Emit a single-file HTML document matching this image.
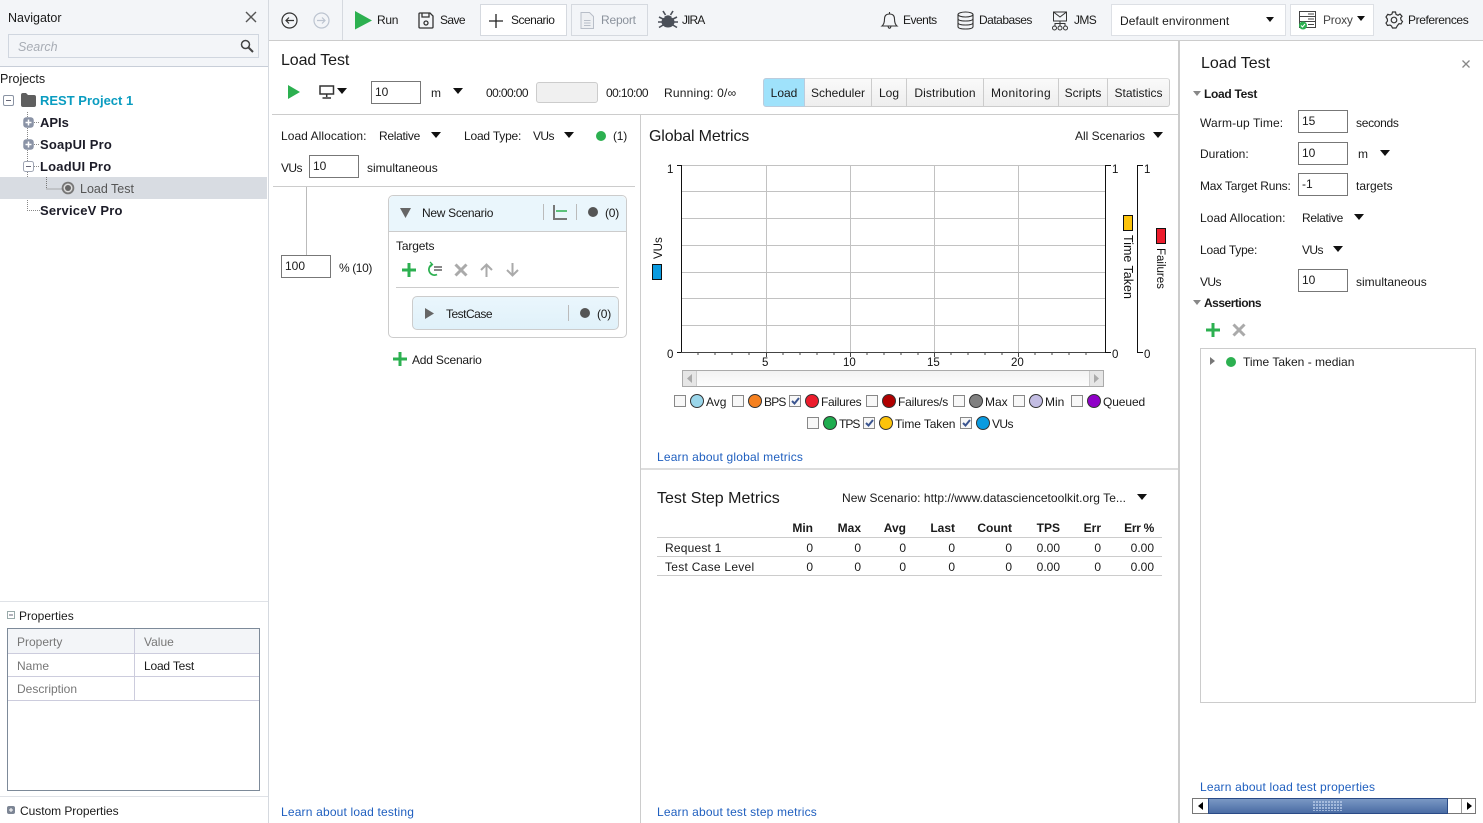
<!DOCTYPE html>
<html><head><meta charset="utf-8"><style>
html,body{margin:0;padding:0;background:#fff}
#r{position:relative;width:1483px;height:823px;overflow:hidden;background:#fff;font:12px "Liberation Sans",sans-serif;color:#1a1a1a}
.t{position:absolute;white-space:nowrap;line-height:16px;height:16px}
.b{position:absolute;box-sizing:border-box}
.h{font-size:16px}
.i{position:absolute;box-sizing:border-box;width:50px;height:23px;border:1px solid #777;background:#fff;padding:2px 3px;line-height:17px;font-size:12px}
.a{position:absolute;width:0;height:0;border-left:6px solid transparent;border-right:6px solid transparent;border-top:6px solid #111}
.l{color:#1f5fbf;letter-spacing:.18px}
.bb{font-weight:bold;color:#1c1c28}
.g{color:#777}
svg{position:absolute;overflow:visible}
.tab{position:absolute;top:78px;height:29px;box-sizing:border-box;border-right:1px solid #ccc;text-align:center;line-height:28px;background:linear-gradient(#fafafa,#eee)}
.th{font-weight:bold;text-align:right}
.n{text-align:right}
.ck{position:absolute;box-sizing:border-box;width:12px;height:12px;border:1px solid #888;background:#f8f8f8}
.dot{position:absolute;box-sizing:border-box;width:14px;height:14px;border:1px solid #333;border-radius:50%}
.s2{letter-spacing:-.2px}.s3{letter-spacing:-.3px}.s4{letter-spacing:-.4px}.s5{letter-spacing:-.5px}.s6{letter-spacing:-.6px}
</style></head><body><div id="r">

<!-- left panel -->
<div class="b" style="left:0;top:0;width:268px;height:67px;background:#f3f5f8;border-bottom:1px solid #c8ced8"></div>
<div class="t" style="left:8px;top:10px;font-size:12.5px">Navigator</div>
<svg style="left:245px;top:11px" width="12" height="12"><path d="M1 1L11 11M11 1L1 11" stroke="#555" stroke-width="1.4" fill="none"/></svg>
<div class="b" style="left:8px;top:34px;width:251px;height:24px;border:1px solid #d0d6df;background:#f3f5f8"></div>
<div class="t" style="left:18px;top:39px;color:#a8adb5;font-style:italic;font-size:12.5px">Search</div>
<svg style="left:240px;top:39px" width="14" height="14"><circle cx="5.5" cy="5.5" r="4" stroke="#444" stroke-width="1.5" fill="none"/><path d="M8.5 8.5L13 13" stroke="#444" stroke-width="2"/></svg>
<div class="b" style="left:268px;top:0;width:1px;height:823px;background:#d5d9df"></div>
<div class="t" style="left:0;top:71px;font-size:12.5px">Projects</div>
<svg style="left:3px;top:95px" width="12" height="12"><rect x=".5" y=".5" width="10" height="10" rx="1.5" fill="#fff" stroke="#8a93a3"/><path d="M3 5.5H8" stroke="#667"/></svg>
<svg style="left:21px;top:93px" width="15" height="14"><path d="M0 2q0-2 2-2h3l2 2h6q2 0 2 2v8q0 2-2 2H2q-2 0-2-2z" fill="#5f5f5f"/></svg>
<div class="t" style="left:40px;top:93px;font-weight:bold;color:#0a9cc0;font-size:13px">REST Project 1</div>
<svg style="left:23px;top:107px" width="30" height="108" fill="none" stroke="#888" stroke-dasharray="1 1"><path d="M4.5 5V103.5H17"/><path d="M11 15.5H17M11 37.5H17M11 59.5H17"/><path d="M24.500 70V81.500H38"/></svg>
<svg style="left:23px;top:117px" width="12" height="12"><rect width="10.500" height="10.500" x=".25" y=".25" rx="3" fill="#8a93a6"/><path d="M5.500 2.500V8.500M2.500 5.500H8.500" stroke="#fff" stroke-width="1.500"/></svg>
<svg style="left:23px;top:139px" width="12" height="12"><rect width="10.500" height="10.500" x=".25" y=".25" rx="3" fill="#8a93a6"/><path d="M5.500 2.500V8.500M2.500 5.500H8.500" stroke="#fff" stroke-width="1.500"/></svg>
<svg style="left:23px;top:161px" width="12" height="12"><rect x=".5" y=".5" width="10" height="10" rx="2" fill="#fff" stroke="#a0a6b4"/><path d="M3 5.500H8" stroke="#667"/></svg>
<div class="t bb" style="left:40px;top:115px;font-size:13px">APIs</div>
<div class="t bb" style="left:40px;top:137px;font-size:13px;letter-spacing:.2px">SoapUI Pro</div>
<div class="t bb" style="left:40px;top:159px;font-size:13px;letter-spacing:.2px">LoadUI Pro</div>
<div class="b" style="left:0;top:177px;width:267px;height:22px;background:#d8dce2"></div>
<svg style="left:46px;top:177px" width="18" height="14" fill="none" stroke="#777" stroke-dasharray="1 1"><path d="M.5 0V12H16"/></svg>
<svg style="left:61px;top:181px" width="14" height="14"><circle cx="7" cy="7" r="6.300" fill="#777"/><circle cx="7" cy="7" r="4.500" fill="#ddd"/><circle cx="7" cy="7" r="3" fill="#666"/></svg>
<div class="t" style="left:80px;top:181px;color:#555;font-size:12.5px">Load Test</div>
<div class="t bb" style="left:40px;top:203px;font-size:13px;letter-spacing:.2px">ServiceV Pro</div>

<div class="b" style="left:0;top:601px;width:268px;height:1px;background:#dfe2e7"></div>
<svg style="left:7px;top:611px" width="9" height="9"><rect x=".5" y=".5" width="7" height="7" fill="#fff" stroke="#9aa"/><path d="M2 4H6" stroke="#667"/></svg>
<div class="t" style="left:19px;top:608px">Properties</div>
<div class="b" style="left:7px;top:628px;width:253px;height:163px;border:1px solid #7d8a99;background:#fff"></div>
<div class="b" style="left:8px;top:629px;width:251px;height:25px;background:#f3f5f8;border-bottom:1px solid #ccd"></div>
<div class="b" style="left:8px;top:676px;width:251px;height:1px;background:#ccd"></div>
<div class="b" style="left:8px;top:700px;width:251px;height:1px;background:#ccd"></div>
<div class="b" style="left:134px;top:629px;width:1px;height:72px;background:#ccd"></div>
<div class="t g" style="left:17px;top:634px">Property</div>
<div class="t g" style="left:144px;top:634px">Value</div>
<div class="t g" style="left:17px;top:658px">Name</div>
<div class="t s2" style="left:144px;top:658px">Load Test</div>
<div class="t g" style="left:17px;top:681px">Description</div>
<div class="b" style="left:0;top:796px;width:268px;height:1px;background:#dfe2e7"></div>
<svg style="left:7px;top:806px" width="9" height="9"><rect width="8" height="8" rx="2" fill="#7c8594"/><path d="M4 2V6M2 4H6" stroke="#fff"/></svg>
<div class="t" style="left:20px;top:803px;letter-spacing:-.05px">Custom Properties</div>

<!-- toolbar -->
<div class="b" style="left:269px;top:0;width:1214px;height:41px;background:#f3f5f8;border-bottom:1px solid #ccc"></div>
<div class="b" style="left:342px;top:0;width:1px;height:40px;background:#d5d9df"></div>
<svg style="left:281px;top:12px" width="17" height="17" fill="none" stroke="#333" stroke-width="1.200"><circle cx="8.500" cy="8.500" r="7.500"/><path d="M13 8.500H5M8 5.500L5 8.500L8 11.500"/></svg>
<svg style="left:313px;top:12px" width="17" height="17" fill="none" stroke="#bcc4d0" stroke-width="1.200"><circle cx="8.500" cy="8.500" r="7.500"/><path d="M4 8.500H12M9 5.500L12 8.500L9 11.500"/></svg>
<svg style="left:355px;top:11px" width="18" height="19"><path d="M0 0L17 9.500L0 18.500z" fill="#2cb050"/></svg>
<div class="t s3" style="left:377px;top:12px">Run</div>
<svg style="left:418px;top:12px" width="16" height="17" fill="none" stroke="#333" stroke-width="1.300"><path d="M1 2Q1 1 2 1H12L15 4V15Q15 16 14 16H2Q1 16 1 15Z"/><path d="M4 1V5H11V1"/><circle cx="8" cy="11" r="2"/></svg>
<div class="t s6" style="left:440px;top:12px">Save</div>
<div class="b" style="left:480px;top:4px;width:87px;height:32px;background:#fff;border:1px solid #d5d9df"></div>
<svg style="left:489px;top:14px" width="14" height="14"><path d="M7 0V14M0 7H14" stroke="#222" stroke-width="1.300"/></svg>
<div class="t s5" style="left:511px;top:12px">Scenario</div>
<div class="b" style="left:571px;top:4px;width:77px;height:32px;background:#f3f5f8;border:1px solid #d5d9df"></div>
<svg style="left:580px;top:11px" width="15" height="19" fill="#eef0f3" stroke="#b8bec8"><path d="M1 1.500H9.500L13.500 5.500V17.500H1Z"/><path d="M4 9.500H10.500M4 12H10.500M4 14.500H10.500" fill="none"/></svg>
<div class="t s2" style="left:601px;top:12px;color:#8b929c">Report</div>
<svg style="left:658px;top:11px" width="20" height="18" fill="#4a4f58"><ellipse cx="10" cy="11" rx="6.500" ry="5.500"/><path d="M6 6Q10 2.500 14 6z"/><path d="M1 6L6 8.500M19 6L14 8.500M0 11H5M20 11H15M1 16.500L6 13.500M19 16.500L14 13.500M5 0L7.500 4M15 0L12.500 4" stroke="#4a4f58" stroke-width="1.600"/></svg>
<div class="t" style="left:682px;top:12px;letter-spacing:-.9px">JIRA</div>
<svg style="left:881px;top:11px" width="17" height="19" fill="none" stroke="#333" stroke-width="1.100"><path d="M1 15Q3.500 13 3.500 8Q3.500 3 8.500 3Q13.500 3 13.500 8Q13.500 13 16 15Z"/><path d="M7 15.500Q8.500 19 10 15.500M8.500 1V3"/></svg>
<div class="t s5" style="left:903px;top:12px">Events</div>
<svg style="left:957px;top:11px" width="17" height="19" fill="none" stroke="#333" stroke-width="1.100"><ellipse cx="8.500" cy="3.500" rx="7.500" ry="2.500"/><path d="M1 3.500V15.500Q1 18 8.500 18Q16 18 16 15.500V3.500M1 7.500Q1 10 8.500 10Q16 10 16 7.500M1 11.500Q1 14 8.500 14Q16 14 16 11.500"/></svg>
<div class="t s5" style="left:979px;top:12px">Databases</div>
<svg style="left:1051px;top:11px" width="19" height="20" fill="none" stroke="#333" stroke-width="1"><rect x="2.500" y="1" width="13" height="9"/><path d="M2.500 1L9 6L15.500 1M9 10V15M4 15V12.500H14V15"/><circle cx="3.500" cy="17" r="2"/><circle cx="9" cy="17" r="2"/><circle cx="14.500" cy="17" r="2"/></svg>
<div class="t s6" style="left:1074px;top:12px">JMS</div>
<div class="b" style="left:1111px;top:4px;width:175px;height:32px;background:#fff;border:1px solid #dde0e5"></div>
<div class="t" style="left:1120px;top:13px;letter-spacing:.1px">Default environment</div>
<div class="a" style="left:1266px;top:17px;border-width:5px 4px 0"></div>
<div class="b" style="left:1290px;top:4px;width:84px;height:32px;background:#fff;border:1px solid #dde0e5"></div>
<svg style="left:1298px;top:10px" width="20" height="20" fill="none" stroke="#444"><rect x="1.500" y="1.500" width="16" height="5"/><rect x="1.500" y="6.500" width="16" height="5"/><rect x="1.500" y="11.500" width="16" height="6"/><path d="M10 4H16M10 9H16M10 14.500H16"/><circle cx="5" cy="15.500" r="4" fill="#2cb050" stroke="none"/><path d="M3 15.500L4.500 17L7 14" stroke="#fff"/></svg>
<div class="t s2" style="left:1323px;top:12px;color:#444">Proxy</div>
<div class="a" style="left:1357px;top:16px;border-width:5px 4px 0"></div>
<svg style="left:1385px;top:11px" width="18" height="18" fill="none" stroke="#333" stroke-width="1.200"><circle cx="9" cy="9" r="2.800"/><path d="M7.500 1H10.500L11 3.300L13 4.300L15 3L17 5.300L15.600 7L16 9L17.500 10.500L16 13L14 12.700L12.500 14.500L11 17H7.500L6.500 15L5 14L2.500 14.500L1 12L2.500 10L2.300 8L1 6L2.800 3.300L5 4L7 3Z"/></svg>
<div class="t s4" style="left:1408px;top:12px">Preferences</div>

<!-- center -->
<div class="t h" style="left:281px;top:53px;letter-spacing:-.1px">Load Test</div>
<svg style="left:288px;top:85px" width="13" height="14"><path d="M0 0L12 7L0 14z" fill="#2cb050"/></svg>
<svg style="left:319px;top:85px" width="16" height="14" fill="none" stroke="#333" stroke-width="1.500"><rect x="1" y="1" width="13.500" height="8"/><path d="M7.700 9V12M3.500 13H12"/></svg>
<div class="a" style="left:337px;top:88px;border-width:6px 5.500px 0"></div>
<div class="i" style="left:371px;top:81px">10</div>
<div class="t" style="left:431px;top:85px">m</div>
<div class="a" style="left:453px;top:88px;border-width:6px 5.500px 0"></div>
<div class="t s6" style="left:486px;top:85px">00:00:00</div>
<div class="b" style="left:536px;top:82px;width:62px;height:21px;background:#f0f0f0;border:1px solid #ccc;border-radius:3px"></div>
<div class="t s6" style="left:606px;top:85px">00:10:00</div>
<div class="t" style="left:664px;top:85px;letter-spacing:.2px">Running: 0/∞</div>
<div class="tab" style="left:763px;width:42px;background:#9fe2fb;border:1px solid #bcd;border-radius:3px 0 0 3px">Load</div>
<div class="tab" style="left:805px;width:67px;border-top:1px solid #ddd;border-bottom:1px solid #ccc">Scheduler</div>
<div class="tab" style="left:872px;width:35px;border-top:1px solid #ddd;border-bottom:1px solid #ccc">Log</div>
<div class="tab" style="left:907px;width:77px;border-top:1px solid #ddd;border-bottom:1px solid #ccc;letter-spacing:.1px">Distribution</div>
<div class="tab" style="left:984px;width:75px;border-top:1px solid #ddd;border-bottom:1px solid #ccc;letter-spacing:.4px">Monitoring</div>
<div class="tab" style="left:1059px;width:49px;border-top:1px solid #ddd;border-bottom:1px solid #ccc">Scripts</div>
<div class="tab" style="left:1108px;width:62px;border-top:1px solid #ddd;border-bottom:1px solid #ccc;border-radius:0 3px 3px 0">Statistics</div>

<div class="b" style="left:272px;top:114px;width:907px;height:1px;background:#ccc"></div>
<div class="b" style="left:640px;top:115px;width:1px;height:708px;background:#ccc"></div>
<div class="b" style="left:1178px;top:41px;width:2px;height:782px;background:#ccc"></div>

<div class="t" style="left:281px;top:128px;letter-spacing:.05px">Load Allocation:</div>
<div class="t s3" style="left:379px;top:128px">Relative</div>
<div class="a" style="left:431px;top:132px;border-width:6px 5.500px 0"></div>
<div class="t s2" style="left:464px;top:128px">Load Type:</div>
<div class="t s6" style="left:533px;top:128px">VUs</div>
<div class="a" style="left:564px;top:132px;border-width:6px 5.500px 0"></div>
<div class="b" style="left:596px;top:131px;width:10px;height:10px;border-radius:50%;background:#2cb050"></div>
<div class="t s2" style="left:613px;top:128px">(1)</div>
<div class="t s6" style="left:281px;top:160px">VUs</div>
<div class="i" style="left:309px;top:155px">10</div>
<div class="t" style="left:367px;top:160px">simultaneous</div>
<div class="b" style="left:273px;top:186px;width:362px;height:1px;background:#ccc"></div>
<div class="b" style="left:306px;top:187px;width:1px;height:68px;background:#bbb"></div>
<div class="i" style="left:281px;top:255px">100</div>
<div class="t s4" style="left:339px;top:260px">% (10)</div>

<div class="b" style="left:388px;top:195px;width:239px;height:143px;border:1px solid #ccc;border-radius:5px;background:#fff"></div>
<div class="b" style="left:389px;top:196px;width:237px;height:36px;background:#eaf6fc;border-bottom:1px solid #ccc;border-radius:5px 5px 0 0"></div>
<svg style="left:400px;top:208px" width="11" height="10"><path d="M0 0H11L5.500 10z" fill="#666"/></svg>
<div class="t s3" style="left:422px;top:205px">New Scenario</div>
<div class="b" style="left:543px;top:204px;width:1px;height:16px;background:#bbb"></div>
<svg style="left:553px;top:205px" width="15" height="15" fill="none"><path d="M1 0V14H14" stroke="#777" stroke-width="2"/><path d="M3 6H14" stroke="#2cb050" stroke-width="1.500"/></svg>
<div class="b" style="left:576px;top:204px;width:1px;height:16px;background:#bbb"></div>
<div class="b" style="left:588px;top:207px;width:10px;height:10px;border-radius:50%;background:#555"></div>
<div class="t s2" style="left:605px;top:205px">(0)</div>
<div class="t" style="left:396px;top:238px;letter-spacing:-.15px">Targets</div>
<svg style="left:402px;top:263px" width="14" height="14"><path d="M7 0V14M0 7H14" stroke="#2cb050" stroke-width="3"/></svg>
<svg style="left:427px;top:262px" width="16" height="15" fill="none" stroke="#2cb050" stroke-width="1.700"><path d="M10 12.500A5.500 5.500 0 1 1 5 2.500"/><path d="M3 0L5.500 2.500L3 5" stroke-width="1.300"/><path d="M7 5H15M7 8H15" stroke="#777"/></svg>
<svg style="left:454px;top:263px" width="14" height="14"><path d="M1.500 1.500L12.500 12.500M12.500 1.500L1.500 12.500" stroke="#aaa" stroke-width="3"/></svg>
<svg style="left:480px;top:263px" width="13" height="14" fill="none" stroke="#aaa" stroke-width="2"><path d="M6.500 14V2M1 7L6.500 1.500L12 7"/></svg>
<svg style="left:506px;top:263px" width="13" height="14" fill="none" stroke="#aaa" stroke-width="2"><path d="M6.500 0V12M1 7L6.500 12.500L12 7"/></svg>
<div class="b" style="left:396px;top:287px;width:223px;height:1px;background:#ccc"></div>
<div class="b" style="left:412px;top:296px;width:207px;height:34px;background:linear-gradient(#eaf6fc,#e0f1fa);border:1px solid #ccc;border-radius:5px"></div>
<svg style="left:425px;top:308px" width="9" height="11"><path d="M0 0L9 5.500L0 11z" fill="#666"/></svg>
<div class="t s5" style="left:446px;top:306px">TestCase</div>
<div class="b" style="left:568px;top:305px;width:1px;height:16px;background:#bbb"></div>
<div class="b" style="left:580px;top:308px;width:10px;height:10px;border-radius:50%;background:#555"></div>
<div class="t s2" style="left:597px;top:306px">(0)</div>
<svg style="left:393px;top:352px" width="14" height="14"><path d="M7 0V14M0 7H14" stroke="#2cb050" stroke-width="3"/></svg>
<div class="t s2" style="left:412px;top:352px">Add Scenario</div>
<div class="t l" style="left:281px;top:804px">Learn about load testing</div>

<!-- global metrics -->
<div class="t h" style="left:649px;top:129px;letter-spacing:-.15px">Global Metrics</div>
<div class="t" style="left:1075px;top:128px">All Scenarios</div>
<div class="a" style="left:1153px;top:132px;border-width:6px 5.500px 0"></div>
<svg style="left:640px;top:150px" width="540" height="230" font-family="Liberation Sans" font-size="11.500" fill="#111">
<g stroke="#c2c2c2" stroke-width="1" fill="none">
<path d="M42 15.500H465M42 41.500H465M42 68.500H465M42 95.500H465M42 122.500H465M42 148.500H465M42 175.500H465"/>
<path d="M126.500 15V202M210.500 15V202M294.500 15V202M378.500 15V202"/>
</g>
<path d="M41.500 15V202.500M465.500 15V202.500M497.500 15V202.500" stroke="#111" stroke-width="1" fill="none"/>
<path d="M37 15.500H42M465 15.500H471M497 15.500H503M37 202.500H42M465 202.500H471M497 202.500H503" stroke="#111" fill="none"/>
<path d="M41 202.500H465" stroke="#444" fill="none"/>
<path d="M126.500 203V207M210.500 203V207M294.500 203V207M378.500 203V207M58 203V205M75 203V205M92 203V205M109 203V205M143 203V205M160 203V205M177 203V205M194 203V205M227 203V205M244 203V205M261 203V205M278 203V205M311 203V205M328 203V205M345 203V205M362 203V205M395 203V205M412 203V205M429 203V205M446 203V205" stroke="#444" fill="none"/>
<text x="27" y="23">1</text><text x="27" y="208">0</text>
<text x="504" y="23">1</text><text x="504" y="208">0</text>
<text x="472" y="23">1</text><text x="472" y="208">0</text>
<text x="122" y="216">5</text><text x="203" y="216">10</text><text x="287" y="216">15</text><text x="371" y="216">20</text>
<text transform="translate(22 109) rotate(-90)" font-size="11.500">VUs</text>
<text transform="translate(484 85) rotate(90)" font-size="12.500">Time Taken</text>
<text transform="translate(517 98) rotate(90)" font-size="11.500">Failures</text>
<rect x="12.500" y="114.500" width="9" height="15" fill="#0a9be0" stroke="#111"/>
<rect x="483.500" y="65.500" width="9" height="15" fill="#fcc30b" stroke="#111"/>
<rect x="516.500" y="78.500" width="9" height="15" fill="#ec1c2c" stroke="#111"/>
</svg>
<div class="b" style="left:682px;top:370px;width:422px;height:17px;background:linear-gradient(#f2f2f2,#fdfdfd);border:1px solid #aaa"></div>
<div class="b" style="left:683px;top:371px;width:14px;height:15px;background:#e6e6e6;border-right:1px solid #ccc"></div>
<div class="b" style="left:1089px;top:371px;width:14px;height:15px;background:#e6e6e6;border-left:1px solid #ccc"></div>
<svg style="left:687px;top:374px" width="6" height="9"><path d="M5 0V9L0 4.500z" fill="#aaa"/></svg>
<svg style="left:1094px;top:374px" width="6" height="9"><path d="M0 0V9L5 4.500z" fill="#aaa"/></svg>

<div class="ck" style="left:674px;top:395px"></div><div class="dot" style="left:690px;top:394px;background:#9ad6ea"></div><div class="t" style="left:706px;top:394px">Avg</div>
<div class="ck" style="left:732px;top:395px"></div><div class="dot" style="left:748px;top:394px;background:#f5801f"></div><div class="t s6" style="left:764px;top:394px;letter-spacing:-.8px">BPS</div>
<div class="ck" style="left:789px;top:395px"></div><svg style="left:791px;top:397px" width="9" height="8"><path d="M1 4L3.500 6.500L8 1" stroke="#3b5590" stroke-width="2" fill="none"/></svg><div class="dot" style="left:805px;top:394px;background:#ec1c2c"></div><div class="t s3" style="left:821px;top:394px">Failures</div>
<div class="ck" style="left:866px;top:395px"></div><div class="dot" style="left:882px;top:394px;background:#b00000"></div><div class="t s2" style="left:898px;top:394px">Failures/s</div>
<div class="ck" style="left:953px;top:395px"></div><div class="dot" style="left:969px;top:394px;background:#808080"></div><div class="t" style="left:985px;top:394px">Max</div>
<div class="ck" style="left:1013px;top:395px"></div><div class="dot" style="left:1029px;top:394px;background:#c3bde3"></div><div class="t" style="left:1045px;top:394px">Min</div>
<div class="ck" style="left:1071px;top:395px"></div><div class="dot" style="left:1087px;top:394px;background:#9000c8"></div><div class="t" style="left:1103px;top:394px;letter-spacing:-.1px">Queued</div>
<div class="ck" style="left:807px;top:417px"></div><div class="dot" style="left:823px;top:416px;background:#1fac4f"></div><div class="t" style="left:839px;top:416px;letter-spacing:-1px">TPS</div>
<div class="ck" style="left:863px;top:417px"></div><svg style="left:865px;top:419px" width="9" height="8"><path d="M1 4L3.500 6.500L8 1" stroke="#3b5590" stroke-width="2" fill="none"/></svg><div class="dot" style="left:879px;top:416px;background:#fcc30b"></div><div class="t" style="left:895px;top:416px;letter-spacing:-.1px">Time Taken</div>
<div class="ck" style="left:960px;top:417px"></div><svg style="left:962px;top:419px" width="9" height="8"><path d="M1 4L3.500 6.500L8 1" stroke="#3b5590" stroke-width="2" fill="none"/></svg><div class="dot" style="left:976px;top:416px;background:#0a9be0"></div><div class="t s6" style="left:992px;top:416px">VUs</div>

<div class="t l" style="left:657px;top:449px">Learn about global metrics</div>
<div class="b" style="left:641px;top:468px;width:537px;height:2px;background:#ddd"></div>

<!-- step metrics -->
<div class="t h" style="left:657px;top:491px">Test Step Metrics</div>
<div class="t" style="left:842px;top:490px;letter-spacing:.04px">New Scenario: http://www.datasciencetoolkit.org Te...</div>
<div class="a" style="left:1137px;top:494px;border-width:6px 5.500px 0"></div>
<div class="t th" style="left:763px;top:520px;width:50px">Min</div>
<div class="t th" style="left:811px;top:520px;width:50px">Max</div>
<div class="t th" style="left:856px;top:520px;width:50px">Avg</div>
<div class="t th" style="left:905px;top:520px;width:50px">Last</div>
<div class="t th" style="left:962px;top:520px;width:50px">Count</div>
<div class="t th" style="left:1010px;top:520px;width:50px">TPS</div>
<div class="t th" style="left:1051px;top:520px;width:50px">Err</div>
<div class="t th" style="left:1104px;top:520px;width:50px;letter-spacing:-.3px">Err %</div>
<div class="b" style="left:657px;top:537px;width:505px;height:1px;background:#ccc"></div>
<div class="b" style="left:657px;top:556px;width:505px;height:1px;background:#ccc"></div>
<div class="b" style="left:657px;top:575px;width:505px;height:1px;background:#ccc"></div>
<div class="t" style="left:665px;top:540px;letter-spacing:.2px">Request 1</div>
<div class="t n" style="left:763px;top:540px;width:50px">0</div><div class="t n" style="left:811px;top:540px;width:50px">0</div><div class="t n" style="left:856px;top:540px;width:50px">0</div><div class="t n" style="left:905px;top:540px;width:50px">0</div><div class="t n" style="left:962px;top:540px;width:50px">0</div><div class="t n" style="left:1010px;top:540px;width:50px">0.00</div><div class="t n" style="left:1051px;top:540px;width:50px">0</div><div class="t n" style="left:1104px;top:540px;width:50px">0.00</div>
<div class="t" style="left:665px;top:559px;letter-spacing:.27px">Test Case Level</div>
<div class="t n" style="left:763px;top:559px;width:50px">0</div><div class="t n" style="left:811px;top:559px;width:50px">0</div><div class="t n" style="left:856px;top:559px;width:50px">0</div><div class="t n" style="left:905px;top:559px;width:50px">0</div><div class="t n" style="left:962px;top:559px;width:50px">0</div><div class="t n" style="left:1010px;top:559px;width:50px">0.00</div><div class="t n" style="left:1051px;top:559px;width:50px">0</div><div class="t n" style="left:1104px;top:559px;width:50px">0.00</div>
<div class="t l" style="left:657px;top:804px">Learn about test step metrics</div>

<!-- right -->
<div class="t h" style="left:1201px;top:56px">Load Test</div>
<svg style="left:1462px;top:60px" width="8" height="8"><path d="M.5 .5L7.500 7.500M7.500 .5L.5 7.500" stroke="#888" stroke-width="1.300"/></svg>
<svg style="left:1193px;top:91px" width="8" height="5"><path d="M0 0H8L4 5z" fill="#888"/></svg>
<div class="t s3" style="left:1204px;top:86px;font-weight:bold">Load Test</div>
<div class="t" style="left:1200px;top:115px;letter-spacing:.13px">Warm-up Time:</div>
<div class="i" style="left:1298px;top:110px">15</div>
<div class="t s3" style="left:1356px;top:115px">seconds</div>
<div class="t" style="left:1200px;top:146px">Duration:</div>
<div class="i" style="left:1298px;top:142px">10</div>
<div class="t" style="left:1358px;top:146px">m</div>
<div class="a" style="left:1380px;top:150px;border-width:6px 5.500px 0"></div>
<div class="t s2" style="left:1200px;top:178px">Max Target Runs:</div>
<div class="i" style="left:1298px;top:173px">-1</div>
<div class="t" style="left:1356px;top:178px">targets</div>
<div class="t" style="left:1200px;top:210px;letter-spacing:.05px">Load Allocation:</div>
<div class="t s3" style="left:1302px;top:210px">Relative</div>
<div class="a" style="left:1354px;top:214px;border-width:6px 5.500px 0"></div>
<div class="t s2" style="left:1200px;top:242px">Load Type:</div>
<div class="t s6" style="left:1302px;top:242px">VUs</div>
<div class="a" style="left:1333px;top:246px;border-width:6px 5.500px 0"></div>
<div class="t s6" style="left:1200px;top:274px">VUs</div>
<div class="i" style="left:1298px;top:269px">10</div>
<div class="t" style="left:1356px;top:274px">simultaneous</div>
<svg style="left:1193px;top:300px" width="8" height="5"><path d="M0 0H8L4 5z" fill="#888"/></svg>
<div class="t s5" style="left:1204px;top:295px;font-weight:bold">Assertions</div>
<svg style="left:1206px;top:323px" width="14" height="14"><path d="M7 0V14M0 7H14" stroke="#2cb050" stroke-width="3"/></svg>
<svg style="left:1232px;top:323px" width="14" height="14"><path d="M1.500 1.500L12.500 12.500M12.500 1.500L1.500 12.500" stroke="#aaa" stroke-width="3"/></svg>
<div class="b" style="left:1200px;top:348px;width:276px;height:355px;border:1px solid #ccc"></div>
<svg style="left:1210px;top:357px" width="5" height="8"><path d="M0 0L5 4L0 8z" fill="#777"/></svg>
<div class="b" style="left:1226px;top:357px;width:10px;height:10px;border-radius:50%;background:#2cb050"></div>
<div class="t" style="left:1243px;top:354px">Time Taken - median</div>
<div class="t l" style="left:1200px;top:779px">Learn about load test properties</div>
<div class="b" style="left:1192px;top:798px;width:284px;height:16px;border:1px solid #777;background:#fff"></div>
<div class="b" style="left:1208px;top:798px;width:240px;height:16px;background:linear-gradient(#7a98c4,#4a6ca4);border:1px solid #2a4a86"></div>
<div class="b" style="left:1313px;top:801px;width:30px;height:10px;background:radial-gradient(circle at 1px 1px,#b8cbe8 .8px,transparent 1px) 0 0/3px 3px"></div>
<div class="b" style="left:1461px;top:799px;width:1px;height:14px;background:#999"></div>
<svg style="left:1198px;top:802px" width="5" height="8"><path d="M5 0V8L0 4z" fill="#000"/></svg>
<svg style="left:1467px;top:802px" width="5" height="8"><path d="M0 0V8L5 4z" fill="#000"/></svg>
</div></body></html>
